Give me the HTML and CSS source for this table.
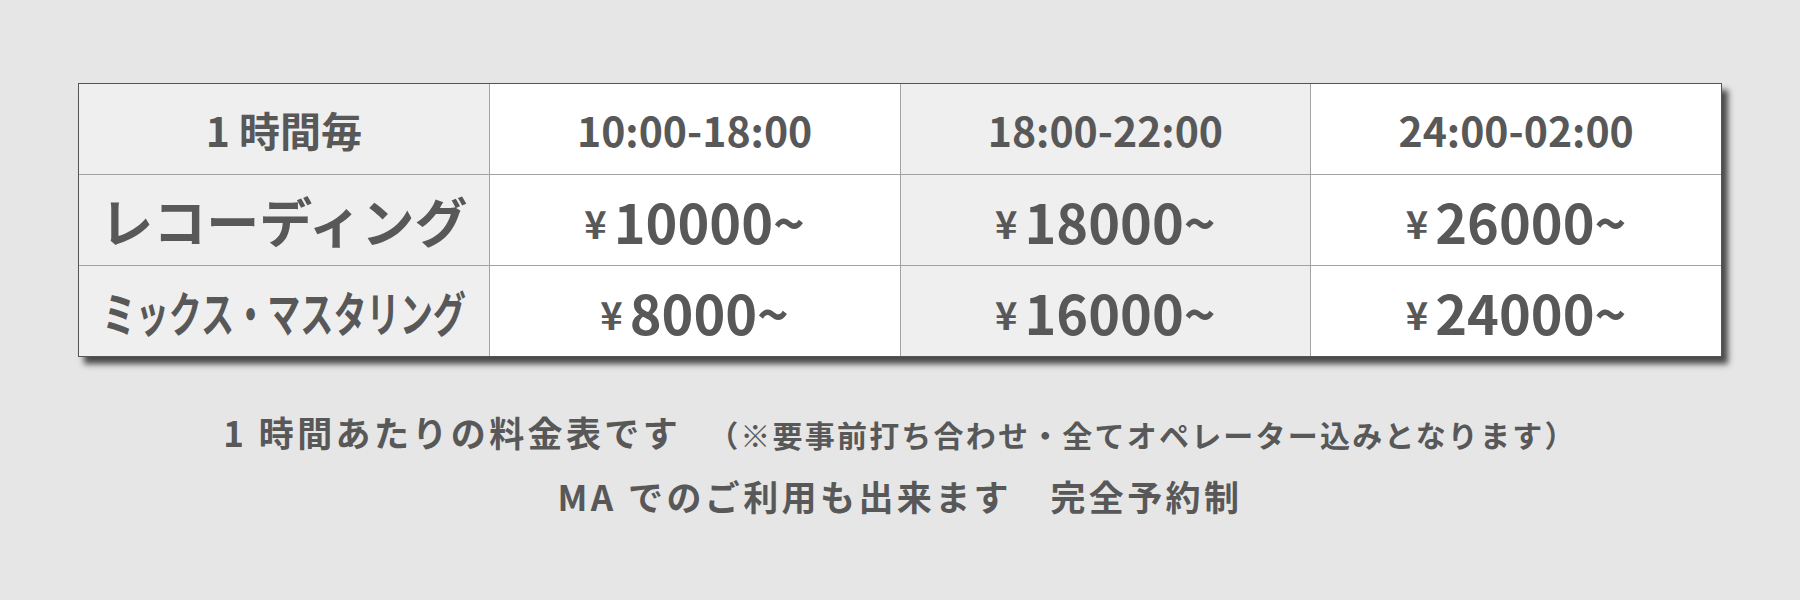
FILE: index.html
```html
<!DOCTYPE html>
<html lang="ja">
<head>
<meta charset="utf-8">
<title>料金表</title>
<link rel="stylesheet" href="styles.css">
</head>
<body>
<main class="page">
  <div class="price-table">
    <div class="cell shade head">1 時間毎</div>
    <div class="cell head">10:00-18:00</div>
    <div class="cell shade head">18:00-22:00</div>
    <div class="cell head">24:00-02:00</div>

    <div class="cell shade label">レコーディング</div>
    <div class="cell price"><span class="yen">¥</span>10000~</div>
    <div class="cell shade price"><span class="yen">¥</span>18000~</div>
    <div class="cell price"><span class="yen">¥</span>26000~</div>

    <div class="cell shade label"><span class="condensed">ミックス・マスタリング</span></div>
    <div class="cell price"><span class="yen">¥</span>8000~</div>
    <div class="cell shade price"><span class="yen">¥</span>16000~</div>
    <div class="cell price"><span class="yen">¥</span>24000~</div>
  </div>

  <div class="notes">
    <p class="note">1 時間あたりの料金表です<span class="aside">（※要事前打ち合わせ・全てオペレーター込みとなります）</span></p>
    <p class="note">MA でのご利用も出来ます　完全予約制</p>
  </div>
</main>
</body>
</html>
```

FILE: styles.css
```css
html, body {
  margin: 0;
  padding: 0;
}

body {
  width: 1800px;
  height: 600px;
  background: #e6e6e6;
  color: #585858;
  font-family: "Noto Sans CJK JP", "Noto Sans", sans-serif;
  font-weight: 700;
  overflow: hidden;
}

.page {
  padding: 83px 78px 0 78px;
}

.price-table {
  display: grid;
  grid-template-columns: repeat(4, minmax(0, 1fr));
  grid-auto-rows: 90px;
  gap: 1px;
  background: #a3a3a3;
  border: 1px solid #555;
  box-shadow: 6px 7px 6px rgba(45, 45, 45, 0.85);
}

.cell {
  background: #ffffff;
  display: flex;
  align-items: center;
  justify-content: center;
  white-space: nowrap;
  line-height: 1;
  min-width: 0;
}

.cell.shade {
  background: #efefef;
}

.head {
  font-size: 41px;
}

.label {
  font-size: 53px;
}

.condensed {
  display: inline-block;
  font-size: 48px;
  transform: scaleX(0.69);
}

.price {
  font-size: 54px;
  padding-top: 2px;
}

.yen {
  font-size: 38px;
  margin-right: 7px;
  position: relative;
  top: 2px;
}

.notes {
  margin-top: 44px;
  text-align: center;
}

.note {
  margin: 0;
  font-size: 35px;
  line-height: 62px;
  letter-spacing: 3.4px;
}

.aside {
  font-size: 30px;
  letter-spacing: 2.2px;
  margin-left: 27px;
}
```
